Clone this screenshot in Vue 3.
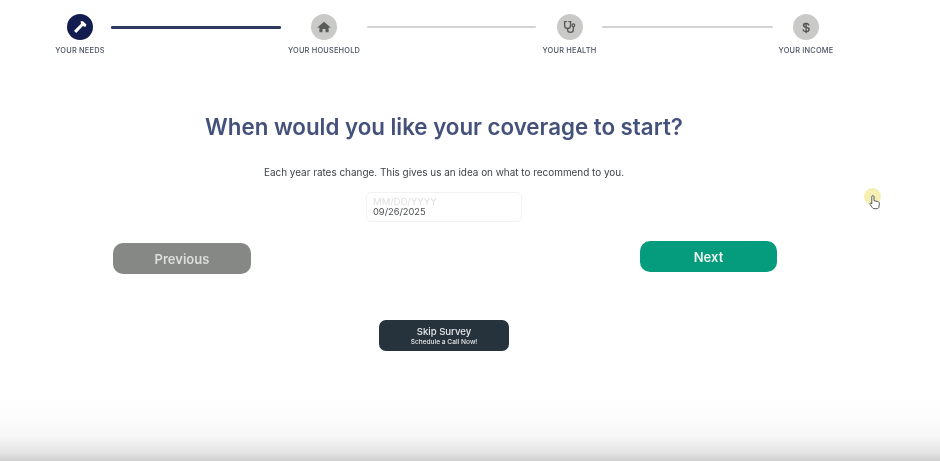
<script setup>
</script>

<template>
  <div class="page">
    <div class="stepper">
      <div class="step w1">
        <span class="dot active">
          <svg width="16" height="16" viewBox="0 0 16 16"><path d="M8.6 2.2 L11 2.2 L14.4 5.4 L13.6 7.8 L12.2 7.8 L11.1 6.8 L4.2 14 L2 11.8 L9 4.8 Z" fill="#fff"/></svg>
        </span>
        <span class="label">YOUR NEEDS</span>
      </div>
      <div class="line done l1"></div>
      <div class="step w2">
        <span class="dot">
          <svg width="14" height="14" viewBox="0 0 14 14"><path d="M7 1.8 L13.4 7.3 L12.6 8 L11.6 7.2 V12.2 H8.5 V9 H5.5 V12.2 H2.4 V7.2 L1.4 8 L0.6 7.3 Z" fill="#5a5c5c"/></svg>
        </span>
        <span class="label">YOUR HOUSEHOLD</span>
      </div>
      <div class="line l2"></div>
      <div class="step w3">
        <span class="dot">
          <svg width="16" height="16" viewBox="0 0 16 16" fill="none" stroke="#5a5c5c" stroke-width="1.4" stroke-linecap="round"><path d="M4.4 2.6 H2.6 V6.2 C2.6 8.2 3.9 9.4 5.6 9.4 C7.3 9.4 8.6 8.2 8.6 6.2 V2.6 H6.8"/><path d="M5.6 9.4 V10.8 C5.6 12.5 6.8 13.4 8.4 13.4 C10 13.4 11.4 12.4 11.4 10.6 V8"/><circle cx="11.4" cy="6.2" r="1.4" stroke-width="1.2"/></svg>
        </span>
        <span class="label">YOUR HEALTH</span>
      </div>
      <div class="line l3"></div>
      <div class="step w4">
        <span class="dot"><span class="dollar">$</span></span>
        <span class="label">YOUR INCOME</span>
      </div>
    </div>

    <main class="content">
      <h1 class="title">When would you like your coverage to start?</h1>
      <p class="sub">Each year rates change. This gives us an idea on what to recommend to you.</p>
      <div class="field">
        <span class="ph">MM/DD/YYYY</span>
        <span class="val">09/26/2025</span>
      </div>
      <div class="actions">
        <button class="btn prev">Previous</button>
        <button class="btn next">Next</button>
      </div>
      <button class="skip">
        <span class="skip-a">Skip Survey</span>
        <span class="skip-b">Schedule a Call Now!</span>
      </button>
    </main>

    <div class="shade"></div>

    <div class="cursor">
      <svg width="12" height="15" viewBox="0 0 12 15"><path d="M2.8 1.6 C2.8 0.4 5 0.4 5 1.6 V5.6 L8.8 6.6 C10 6.9 10.6 7.6 10.4 8.8 L9.9 12 C9.8 13 9.2 13.7 8.2 13.7 H5 C4.2 13.7 3.8 13.3 3.3 12.6 L1.1 9.4 C0.5 8.4 1.7 7.6 2.4 8.4 L2.8 8.9 Z" fill="#fff" stroke="#4a4a4a" stroke-width="0.9"/></svg>
    </div>
  </div>
</template>

<style scoped>
.page {
  position: relative;
  width: 940px;
  height: 461px;
  overflow: hidden;
  background: #fff;
  display: flex;
  flex-direction: column;
  font-family: Inter, "Open Sans", sans-serif;
  filter: blur(0.45px);
}
.stepper {
  display: flex;
  align-items: flex-start;
  padding: 14px 0 0 55px;
}
.step {
  display: flex;
  flex-direction: column;
  align-items: center;
  flex: none;
}
.w1 { width: 50px; }
.w2 { width: 74px; }
.w3 { width: 53px; }
.w4 { width: 54px; }
.dot {
  width: 26px;
  height: 26px;
  border-radius: 50%;
  background: #c9cac8;
  display: flex;
  align-items: center;
  justify-content: center;
}
.dot.active { background: #131c4e; }
.dollar {
  font-family: "Liberation Sans", sans-serif;
  font-size: 13px;
  font-weight: 400;
  color: #4a4c4c;
  -webkit-text-stroke: 0.3px #4a4c4c;
}
.label {
  margin-top: 6px;
  font-size: 7.4px;
  line-height: 9px;
  font-weight: 500;
  letter-spacing: 0.2px;
  color: #4a5160;
  white-space: nowrap;
}
.line {
  flex: none;
  height: 2px;
  margin-top: 12px;
  background: #d3d4d2;
  border-radius: 1px;
}
.l1 { width: 170px; margin-left: 6px; margin-right: 6px; }
.l2 { width: 169px; margin-left: 6px; margin-right: 7px; }
.l3 { width: 171px; margin-left: 6px; margin-right: 6px; }
.line.done { background: #2f3a63; height: 3px; }
.content {
  width: 888px;
  display: flex;
  flex-direction: column;
  align-items: center;
}
.title {
  margin: 58px 0 0;
  font-size: 22.3px;
  line-height: 28px;
  font-weight: 600;
  color: #44517a;
  white-space: nowrap;
}
.sub {
  margin: 24px 0 0;
  font-size: 9.93px;
  line-height: 14px;
  color: #3f4347;
  white-space: nowrap;
}
.field {
  margin-top: 13px;
  width: 156px;
  height: 30px;
  box-sizing: border-box;
  border: 1px solid #f2f2f2;
  border-radius: 5px;
  padding: 4px 6px;
  display: flex;
  flex-direction: column;
}
.ph {
  font-size: 9.6px;
  line-height: 10px;
  color: #e0e0e0;
}
.val {
  font-size: 9.3px;
  line-height: 10px;
  color: #4a4c4e;
}
.actions {
  width: 664px;
  margin: 19px 0 0 2px;
  display: flex;
  justify-content: space-between;
  align-items: flex-start;
}
.btn {
  border: 0;
  border-radius: 10px;
  color: #eef2ef;
  font-family: inherit;
  font-weight: 600;
  font-size: 13px;
  padding: 0;
}
.prev {
  width: 138px;
  height: 31px;
  margin-top: 2px;
  background: #858884;
  color: #dcdedb;
}
.next {
  width: 137px;
  height: 31px;
  background: #049c7c;
}
.skip {
  margin-top: 46px;
  width: 130px;
  height: 31px;
  border: 0;
  border-radius: 7px;
  background: #27333c;
  color: #e6e8ea;
  font-family: inherit;
  display: flex;
  flex-direction: column;
  align-items: center;
  justify-content: center;
  padding: 0;
}
.skip-a { font-size: 9.6px; line-height: 12px; font-weight: 500; }
.skip-b { font-size: 6.6px; line-height: 8px; font-weight: 500; }
.shade {
  margin-top: auto;
  height: 70px;
  background: linear-gradient(to bottom, #ffffff 0%, #fdfdfd 35%, #f6f6f6 65%, #e4e4e4 88%, #cfcfcf 100%);
}
.cursor {
  position: absolute;
  left: 864px;
  top: 188px;
  width: 17px;
  height: 17px;
  border-radius: 50%;
  background: #f6efb4;
}
.cursor svg {
  position: absolute;
  left: 5px;
  top: 7px;
}
</style>
